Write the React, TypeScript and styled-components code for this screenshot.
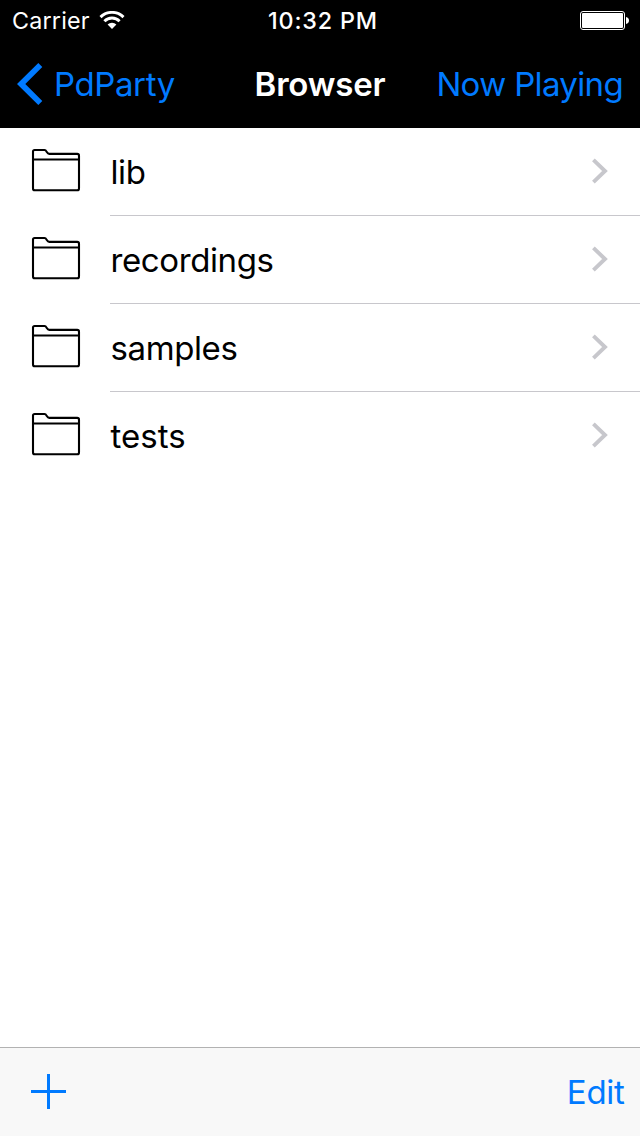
import React from "react";
import styled, { createGlobalStyle } from "styled-components";

const BLUE = "#007aff";

const GlobalStyle = createGlobalStyle`
  * { box-sizing: border-box; }
  body { margin: 0; background: #fff; font-family: Inter, "Liberation Sans", sans-serif; }
  svg { display: block; flex: none; }
`;

const Screen = styled.div`
  width: 640px;
  height: 1136px;
  display: flex;
  flex-direction: column;
  background: #fff;
`;

const StatusBar = styled.div`
  height: 40px;
  padding: 0 11px 0 12px;
  display: grid;
  grid-template-columns: 1fr auto 1fr;
  align-items: center;
  background: #000;
  color: #fff;
`;

const StatusText = styled.span<{ $strong?: boolean }>`
  font-size: 23.3px;
  line-height: 38px;
  padding-left: ${(p) => (p.$strong ? "5px" : "0")};
  padding-top: 2px;
  white-space: nowrap;
  font-weight: ${(p) => (p.$strong ? 550 : 400)};
  letter-spacing: ${(p) => (p.$strong ? "0.85px" : "0.2px")};
`;

const Carrier = styled.div`
  display: flex;
  align-items: center;
  gap: 9.5px;
`;

const BatterySlot = styled.div`
  display: flex;
  justify-content: flex-end;
`;

const NavBar = styled.header`
  height: 88px;
  padding: 0 17px;
  display: grid;
  grid-template-columns: 1fr auto 1fr;
  align-items: center;
  background: #000;
`;

const Label = styled.span<{ $spacing: number; $color?: string; $bold?: boolean }>`
  font-size: 33px;
  line-height: 40px;
  white-space: nowrap;
  font-weight: ${(p) => (p.$bold ? 600 : 400)};
  color: ${(p) => p.$color ?? "#000"};
  letter-spacing: ${(p) => p.$spacing}px;
`;

const BackButton = styled.div`
  display: flex;
  align-items: center;
  gap: 11px;
`;

const NavAction = styled.div`
  display: flex;
  justify-content: flex-end;
`;

const List = styled.main`
  flex: 1;
`;

const Row = styled.div`
  height: 88px;
  padding-left: 31px;
  display: flex;
  align-items: stretch;
`;

const FolderSlot = styled.div`
  width: 79px;
  padding-top: 20px;
`;

const RowBody = styled.div<{ $last: boolean }>`
  flex: 1;
  padding: 0 31px 0 0.5px;
  display: flex;
  align-items: center;
  justify-content: space-between;
  border-bottom: 1px solid ${(p) => (p.$last ? "transparent" : "#c8c7cc")};
`;

const Toolbar = styled.footer`
  height: 89px;
  padding: 0 15.5px 0 31px;
  display: flex;
  align-items: center;
  justify-content: space-between;
  background: #f8f8f8;
  border-top: 1px solid #b2b2b2;
`;

const WifiIcon = () => (
  <svg width="26" height="18" viewBox="0 0 26 18" fill="none" stroke="#fff" strokeWidth="2.900">
    <path d="M1.500 6.100a16.300 16.300 0 0 1 23 0" />
    <path d="M5.400 10.200a10.700 10.700 0 0 1 15.200 0" />
    <path d="M13 18L8.600 13.600a6.200 6.200 0 0 1 8.800 0Z" fill="#fff" stroke="none" />
  </svg>
);

const BatteryIcon = () => (
  <svg width="49" height="19" viewBox="0 0 49 19">
    <rect x="0.5" y="0.5" width="44" height="18" rx="2.5" fill="none" stroke="#fff" />
    <rect x="2" y="2" width="41" height="15" rx="1" fill="#fff" />
    <path d="M46 6c2 .4 3 1.7 3 3.500s-1 3.100-3 3.500Z" fill="#fff" />
  </svg>
);

const BackIcon = () => (
  <svg width="26" height="42" viewBox="0 0 26 42">
    <path d="M21.300 0L25.300 4L8.300 21L25.300 38L21.300 42L0 21Z" fill={BLUE} />
  </svg>
);

const FolderIcon = () => (
  <svg width="50" height="44" viewBox="0 0 50 44" fill="none" stroke="#000" strokeWidth="2.100">
    <path d="M2 11.500V3.600Q2 2 3.600 2H13.500C15.800 2 15.800 5.900 18.200 5.900H46.200Q48 5.900 48 7.700V40.400Q48 42.200 46.200 42.200H3.800Q2 42.200 2 40.400V11.500H48" />
  </svg>
);

const ChevronIcon = () => (
  <svg width="18" height="28" viewBox="0 0 18 28" fill="none" stroke="#c7c7cc" strokeWidth="3.900">
    <path d="M2.400 1.900L14 13L2.400 24.100" />
  </svg>
);

const PlusIcon = () => (
  <svg width="35" height="37" viewBox="0 0 35 37" fill={BLUE}>
    <rect x="16" y="0" width="3" height="35" />
    <rect x="0" y="16" width="35" height="3" />
  </svg>
);

const folders = [
  { name: "lib", spacing: -0.4 },
  { name: "recordings", spacing: -0.4 },
  { name: "samples", spacing: -0.4 },
  { name: "tests", spacing: 0.05 },
];

export default function App() {
  return (
    <Screen>
      <GlobalStyle />
      <StatusBar>
        <Carrier>
          <StatusText>Carrier</StatusText>
          <WifiIcon />
        </Carrier>
        <StatusText $strong>10:32 PM</StatusText>
        <BatterySlot>
          <BatteryIcon />
        </BatterySlot>
      </StatusBar>
      <NavBar>
        <BackButton>
          <BackIcon />
          <Label $color={BLUE} $spacing={-0.4}>PdParty</Label>
        </BackButton>
        <Label $color="#fff" $bold $spacing={-0.2}>Browser</Label>
        <NavAction>
          <Label $color={BLUE} $spacing={-0.65}>Now Playing</Label>
        </NavAction>
      </NavBar>
      <List>
        {folders.map((folder, i) => (
          <Row key={folder.name}>
            <FolderSlot>
              <FolderIcon />
            </FolderSlot>
            <RowBody $last={i === folders.length - 1}>
              <Label $spacing={folder.spacing}>{folder.name}</Label>
              <ChevronIcon />
            </RowBody>
          </Row>
        ))}
      </List>
      <Toolbar>
        <PlusIcon />
        <Label $color={BLUE} $spacing={-0.3}>Edit</Label>
      </Toolbar>
    </Screen>
  );
}
